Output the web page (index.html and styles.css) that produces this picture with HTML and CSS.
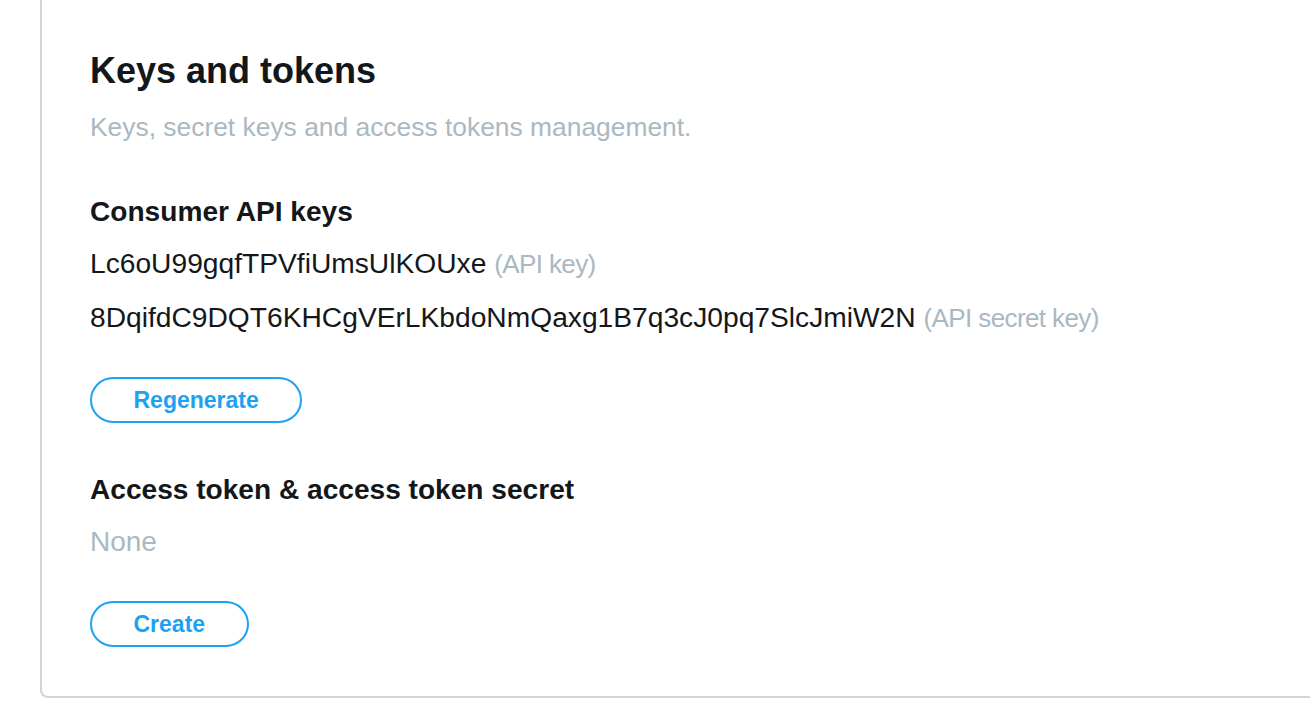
FILE: index.html
```html
<!DOCTYPE html>
<html lang="en">
<head>
<meta charset="utf-8">
<title>Keys and tokens</title>
<link rel="stylesheet" href="styles.css">
</head>
<body>
<main class="card">
  <h1 class="title">Keys and tokens</h1>
  <p class="subtitle">Keys, secret keys and access tokens management.</p>

  <section class="section">
    <h2 class="section-title">Consumer API keys</h2>
    <p class="key">Lc6oU99gqfTPVfiUmsUlKOUxe <span class="hint">(API key)</span></p>
    <p class="key">8DqifdC9DQT6KHCgVErLKbdoNmQaxg1B7q3cJ0pq7SlcJmiW2N <span class="hint">(API secret key)</span></p>
    <button class="btn btn-regen" type="button">Regenerate</button>
  </section>

  <section class="section section-access">
    <h2 class="section-title">Access token &amp; access token secret</h2>
    <p class="none">None</p>
    <button class="btn btn-create" type="button">Create</button>
  </section>
</main>
</body>
</html>
```

FILE: styles.css
```css
html, body {
  margin: 0;
  padding: 0;
  background: #ffffff;
}

body {
  font-family: "Liberation Sans", Arial, Helvetica, sans-serif;
  color: #14171a;
  overflow: hidden;
}

.card {
  display: flex;
  flex-direction: column;
  align-items: flex-start;
  margin-left: 40px;
  padding: 49px 0 49px 48px;
  border-left: 2px solid #ccd6dd;
  border-bottom: 2px solid #ccd6dd;
  border-bottom-left-radius: 8px;
}

.title {
  margin: 0;
  font-size: 36px;
  line-height: 44px;
  font-weight: 700;
  color: #14171a;
}

.subtitle {
  margin: 18px 0 0;
  font-size: 26.4px;
  line-height: 32px;
  color: #aab8c2;
}

.section {
  display: flex;
  flex-direction: column;
  align-items: flex-start;
}

.section-title {
  margin: 51px 0 0;
  font-size: 28.1px;
  line-height: 36px;
  font-weight: 700;
  color: #14171a;
}

.section-access .section-title {
  margin-top: 49px;
}

.key {
  margin: 0;
  height: 54px;
  font-size: 28.2px;
  line-height: 54px;
  color: #14171a;
  white-space: nowrap;
}

.section-title + .key {
  margin-top: 6px;
}

.hint {
  font-size: 26px;
  line-height: 1;
  letter-spacing: -0.6px;
  color: #aab8c2;
}

.none {
  margin: 16px 0 0;
  font-size: 28px;
  line-height: 36px;
  color: #aab8c2;
}

.btn {
  box-sizing: border-box;
  height: 46px;
  padding: 0 41.5px;
  border: 2px solid #1da1f2;
  border-radius: 999px;
  background: #ffffff;
  color: #1da1f2;
  font-family: "Liberation Sans", Arial, Helvetica, sans-serif;
  font-size: 23px;
  font-weight: 700;
  line-height: 42px;
  cursor: pointer;
}

.btn-regen {
  margin-top: 33px;
}

.btn-create {
  margin-top: 41px;
}
```
